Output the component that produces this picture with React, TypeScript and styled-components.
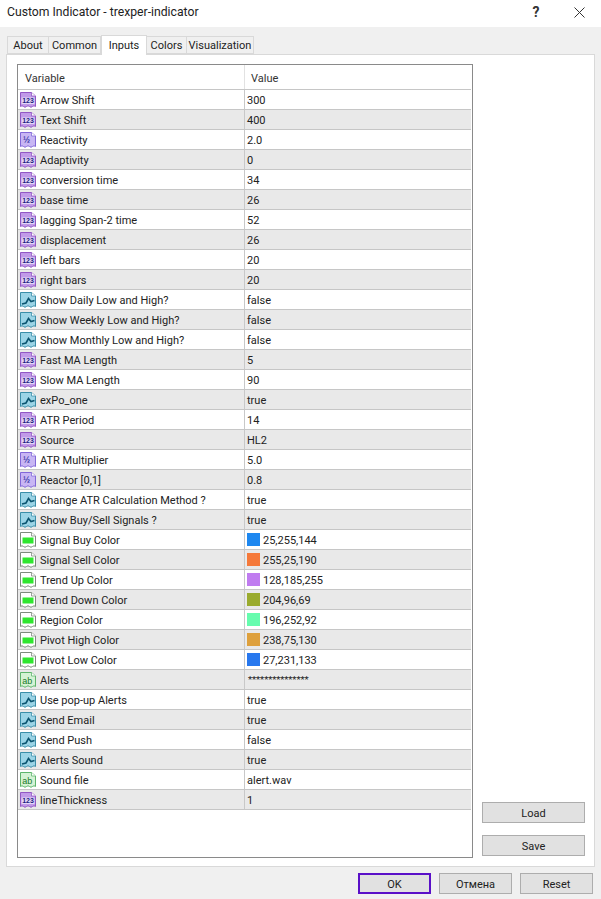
import React from "react";
import styled, { createGlobalStyle } from "styled-components";

const Global = createGlobalStyle`
  html, body { margin: 0; padding: 0; background: #f0f0f0; }
  body { font-family: Roboto, "Liberation Sans", sans-serif; font-size: 11px; color: #1a1a1a; }
`;

const Window = styled.div`
  width: 601px; height: 899px; display: flex; flex-direction: column; background: #f0f0f0; overflow: hidden;
`;
const TitleBar = styled.header`
  height: 27px; flex: none; background: #fff; display: flex; align-items: center; padding: 0 16px 3px 7px; box-sizing: border-box;
`;
const Title = styled.div`
  flex: 1; font-size: 12.2px; color: #222;
`;
const Help = styled.div`
  width: 14px; margin-right: 31px; font-size: 14px; font-weight: 700; text-align: center; color: #333;
`;
const Tabs = styled.nav`
  height: 27px; flex: none; display: flex; align-items: flex-end; padding-left: 7px; box-sizing: border-box; position: relative; z-index: 1;
`;
const Tab = styled.div<{ $active?: boolean; $w: number }>`
  width: ${(p) => p.$w}px;
  height: ${(p) => (p.$active ? 20 : 18)}px;
  margin-bottom: ${(p) => (p.$active ? -1 : 0)}px;
  box-sizing: border-box;
  display: flex; align-items: center; justify-content: center;
  background: ${(p) => (p.$active ? "#fff" : "#f0f0f0")};
  border: 1px solid #d9d9d9;
  border-bottom: ${(p) => (p.$active ? "none" : "1px solid #d9d9d9")};
  border-left: ${(p) => (p.$active ? "1px solid #d9d9d9" : "none")};
  color: #222;
  &:first-child { border-left: 1px solid #d9d9d9; }
`;
const Panel = styled.section`
  margin: 0 6px; height: 813px; flex: none; box-sizing: border-box; background: #fff; border: 1px solid #d9d9d9;
  padding: 9px 9px 9px 10px; display: flex; gap: 9px;
`;
const Table = styled.div`
  width: 456px; height: 794px; flex: none; box-sizing: border-box; border: 1px solid #8a8a8a; padding-right: 1px;
  display: flex; flex-direction: column;
`;
const HeaderRow = styled.div`
  height: 24px; flex: none; display: grid; grid-template-columns: 226px 1fr; box-sizing: border-box;
`;
const HeaderCell = styled.div<{ $value?: boolean }>`
  display: flex; align-items: center; padding: 2px 0 0 ${(p) => (p.$value ? 6 : 7)}px; box-sizing: border-box; color: #333;
  ${(p) => p.$value && "border-left: 1px solid #e2e2e2;"}
`;
const Row = styled.div<{ $alt: boolean }>`
  height: 20px; flex: none; box-sizing: border-box; display: grid; grid-template-columns: 226px 1fr;
  background: ${(p) => (p.$alt ? "#e9e9e9" : "#fff")};
  border-top: 1px solid #c6c6c6;
  &:first-of-type { border-top-color: #fff; }
  &:last-child { border-bottom: 1px solid #c6c6c6; height: 21px; }
`;
const NameCell = styled.div`
  display: flex; align-items: center; gap: 3px; padding-left: 2px; min-width: 0; white-space: nowrap; color: #222;
`;
const ValueCell = styled.div`
  display: flex; align-items: center; gap: 3px; padding-left: 2px; border-left: 1px solid #c8c8c8; color: #222;
`;
const CellText = styled.span`
  padding-top: 2px;
`;
const Stars = styled.span`
  font-size: 9.6px; letter-spacing: -0.1px; padding: 0 0 1px 1px;
`;
const Swatch = styled.span<{ $color: string }>`
  width: 13px; height: 13px; flex: none; background: ${(p) => p.$color};
`;
const Side = styled.aside`
  flex: 1; display: flex; flex-direction: column; justify-content: flex-end; gap: 12px; padding-bottom: 1px;
`;
const Button = styled.button<{ $w?: number; $primary?: boolean }>`
  width: ${(p) => p.$w ?? 103}px; height: 21px; box-sizing: border-box; padding: 2px 0 0;
  font: inherit; color: #222; background: #e1e1e1;
  border: ${(p) => (p.$primary ? "2px solid #5a10c8" : "1px solid #adadad")};
`;
const Footer = styled.footer`
  flex: 1; display: flex; justify-content: flex-end; align-items: center; gap: 8px; padding: 0 8px 0 0;
`;
const IconBox = styled.svg`
  width: 17px; height: 18px; flex: none; display: block;
`;

type Kind = "int" | "dbl" | "bool" | "color" | "str";
const palette: Record<Kind, { stroke: string; fill: string }> = {
  int: { stroke: "#9257c4", fill: "#c19ae8" },
  dbl: { stroke: "#8268d8", fill: "#c8b6f4" },
  bool: { stroke: "#3a8ea8", fill: "#9bd4e6" },
  color: { stroke: "#7d8a7d", fill: "#ffffff" },
  str: { stroke: "#5db56c", fill: "#d4f2d4" },
};
const sheet = "M0.5 1.5H11.5L15.5 5V15.5Q14 14 12.5 15.5T9.5 15.5T6.5 15.5T3.5 15.5T0.5 15.5Z";

function Icon({ kind }: { kind: Kind }) {
  const c = palette[kind];
  return (
    <IconBox viewBox="0 0 17 18">
      <path d={sheet} fill={c.fill} stroke={c.stroke} strokeWidth="1" />
      <path d="M11.5 1.5V5H15.5" fill="#fff" stroke={c.stroke} strokeWidth="0.8" />
      {kind === "int" && <rect x="1.5" y="6.5" width="13" height="6.5" fill="#e4d8f8" />}
      {kind === "int" && <text x="8" y="12.3" textAnchor="middle" fontSize="7" fontWeight="700" fontFamily="Liberation Sans" fill="#1c1c80">123</text>}
      {kind === "dbl" && <text x="6.5" y="11.5" textAnchor="middle" fontSize="8.5" fontWeight="700" fontFamily="Liberation Sans" fill="#3a3aa8">½</text>}
      {kind === "bool" && <path d="M2 13L6 12L8.5 7.5L11 10.5L14.5 9.5" fill="none" stroke="#0b5570" strokeWidth="1.6" />}
      {kind === "color" && <rect x="2.5" y="6.5" width="11" height="6" fill="#2fe62f" />}
      {kind === "str" && <text x="7.2" y="12.5" textAnchor="middle" fontSize="9" fontFamily="Liberation Sans" fill="#167a26">ab</text>}
    </IconBox>
  );
}

type Item = { name: string; value: string; kind: Kind; swatch?: string };
const rows: Item[] = [
  { name: "Arrow Shift", value: "300", kind: "int" },
  { name: "Text Shift", value: "400", kind: "int" },
  { name: "Reactivity", value: "2.0", kind: "dbl" },
  { name: "Adaptivity", value: "0", kind: "int" },
  { name: "conversion time", value: "34", kind: "int" },
  { name: "base time", value: "26", kind: "int" },
  { name: "lagging Span-2 time", value: "52", kind: "int" },
  { name: "displacement", value: "26", kind: "int" },
  { name: "left bars", value: "20", kind: "int" },
  { name: "right bars", value: "20", kind: "int" },
  { name: "Show Daily Low and High?", value: "false", kind: "bool" },
  { name: "Show Weekly Low and High?", value: "false", kind: "bool" },
  { name: "Show Monthly Low and High?", value: "false", kind: "bool" },
  { name: "Fast MA Length", value: "5", kind: "int" },
  { name: "Slow MA Length", value: "90", kind: "int" },
  { name: "exPo_one", value: "true", kind: "bool" },
  { name: "ATR Period", value: "14", kind: "int" },
  { name: "Source", value: "HL2", kind: "int" },
  { name: "ATR Multiplier", value: "5.0", kind: "dbl" },
  { name: "Reactor [0,1]", value: "0.8", kind: "dbl" },
  { name: "Change ATR Calculation Method ?", value: "true", kind: "bool" },
  { name: "Show Buy/Sell Signals ?", value: "true", kind: "bool" },
  { name: "Signal Buy Color", value: "25,255,144", kind: "color", swatch: "#1e88f0" },
  { name: "Signal Sell Color", value: "255,25,190", kind: "color", swatch: "#f5793a" },
  { name: "Trend Up Color", value: "128,185,255", kind: "color", swatch: "#c07cf0" },
  { name: "Trend Down Color", value: "204,96,69", kind: "color", swatch: "#9aab2e" },
  { name: "Region Color", value: "196,252,92", kind: "color", swatch: "#66fcae" },
  { name: "Pivot High Color", value: "238,75,130", kind: "color", swatch: "#dea03c" },
  { name: "Pivot Low Color", value: "27,231,133", kind: "color", swatch: "#2878ee" },
  { name: "Alerts", value: "***************", kind: "str" },
  { name: "Use pop-up Alerts", value: "true", kind: "bool" },
  { name: "Send Email", value: "true", kind: "bool" },
  { name: "Send Push", value: "false", kind: "bool" },
  { name: "Alerts Sound", value: "true", kind: "bool" },
  { name: "Sound file", value: "alert.wav", kind: "str" },
  { name: "lineThickness", value: "1", kind: "int" },
];

export default function App() {
  return (
    <Window>
      <Global />
      <TitleBar>
        <Title>Custom Indicator - trexper-indicator</Title>
        <Help>?</Help>
        <svg width="11" height="11" viewBox="0 0 11 11">
          <path d="M0.5 0.5L10.5 10.5M10.5 0.5L0.5 10.5" stroke="#333" strokeWidth="1" fill="none" />
        </svg>
      </TitleBar>
      <Tabs>
        <Tab $w={42}>About</Tab>
        <Tab $w={52}>Common</Tab>
        <Tab $w={46} $active>Inputs</Tab>
        <Tab $w={40}>Colors</Tab>
        <Tab $w={67}>Visualization</Tab>
      </Tabs>
      <Panel>
        <Table>
          <HeaderRow>
            <HeaderCell>Variable</HeaderCell>
            <HeaderCell $value>Value</HeaderCell>
          </HeaderRow>
          {rows.map((r, i) => (
            <Row key={r.name} $alt={i % 2 === 1}>
              <NameCell>
                <Icon kind={r.kind} />
                <CellText>{r.name}</CellText>
              </NameCell>
              <ValueCell>
                {r.swatch && <Swatch $color={r.swatch} />}
                {r.name === "Alerts" ? <Stars>{r.value}</Stars> : <CellText>{r.value}</CellText>}
              </ValueCell>
            </Row>
          ))}
        </Table>
        <Side>
          <Button>Load</Button>
          <Button>Save</Button>
        </Side>
      </Panel>
      <Footer>
        <Button $w={73} $primary>OK</Button>
        <Button $w={73}>Отмена</Button>
        <Button $w={73}>Reset</Button>
      </Footer>
    </Window>
  );
}
